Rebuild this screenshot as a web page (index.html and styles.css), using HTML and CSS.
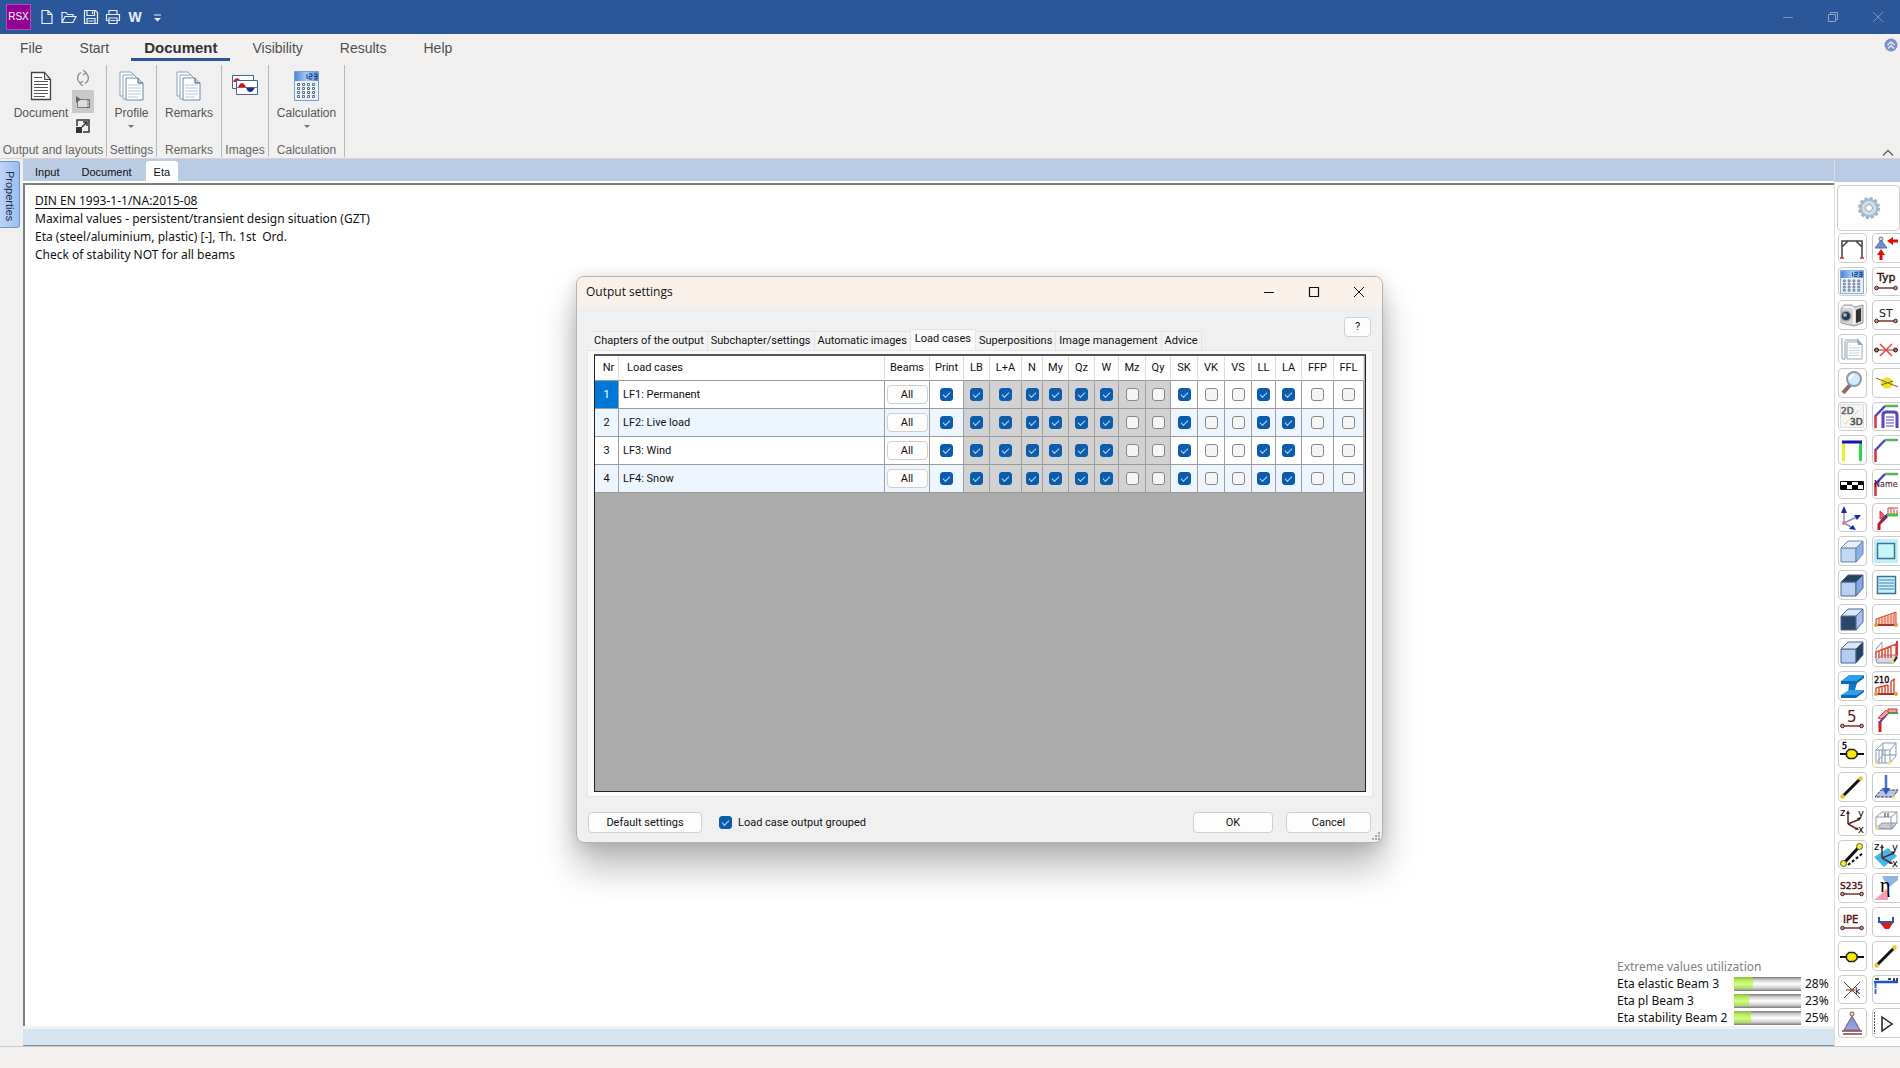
FILE: index.html
```html
<!DOCTYPE html>
<html lang="en">
<head>
<meta charset="utf-8">
<title>RSX - Output settings</title>
<link rel="stylesheet" href="styles.css">
</head>
<body>
<svg class="defs" aria-hidden="true">
  <defs>
    <linearGradient id="gHead" x1="0" y1="0" x2="1" y2="0"><stop offset="0" stop-color="#4f87dc"/><stop offset=".5" stop-color="#a9c9f5"/><stop offset="1" stop-color="#5b90df"/></linearGradient>
    <linearGradient id="gCone" x1="0" y1="0" x2="0" y2="1"><stop offset="0" stop-color="#6f8fd0"/><stop offset="1" stop-color="#a9a4d8"/></linearGradient>
    <g id="pages">
      <path d="M1 1h11l4 4v20H1z" fill="#fff" stroke="#8aa3c0"/>
      <path d="M4 4h11l4 4v20H4z" fill="#fff" stroke="#8aa3c0"/>
      <path d="M7 7h12l5 5v17H7z" fill="#fff" stroke="#6d89a8"/>
      <path d="M19 7v5h5" fill="#c9d8ea" stroke="#41566e"/>
      <path d="M9 14h13M9 17h13M9 20h13M9 23h13M9 26h10" stroke="#b5c9e0"/>
    </g>
    <g id="calc">
      <path d="M.5.5h24v29H.5z" fill="#eaf2fc" stroke="#7c9cc8"/>
      <path d="M1 1h23v9H1z" fill="url(#gHead)"/>
      <path d="M13 3v5M15 3h3v2.500h-3V8h3M20 3h3v5h-3M20 5.500h3" fill="none" stroke="#143a7c"/>
      <g fill="#fff" stroke="#5f6f88"><path d="M3.500 12.500h2v2h-2zM8.500 12.500h2v2h-2zM13.500 12.500h2v2h-2zM18.500 12.500h2v2h-2zM3.500 16.500h2v2h-2zM8.500 16.500h2v2h-2zM13.500 16.500h2v2h-2zM18.500 16.500h2v2h-2zM3.500 20.500h2v2h-2zM8.500 20.500h2v2h-2zM13.500 20.500h2v2h-2zM18.500 20.500h2v2h-2zM3.500 24.500h2v2h-2zM8.500 24.500h2v2h-2zM13.500 24.500h2v2h-2zM18.500 24.500h2v2h-2z"/></g>
    </g>
    <g id="beam"><path d="M3 18h18" stroke="#7b3030" stroke-width="1.500"/><circle cx="2.500" cy="18" r="1.800" fill="#c98" stroke="#401818"/><circle cx="21.500" cy="18" r="1.800" fill="#c98" stroke="#401818"/></g>
    <g id="poly" fill="none" stroke-width="2.500"><path d="M1.500 24V11" stroke="#d8343c"/><path d="M1.500 12L11 2" stroke="#4a45c8"/><path d="M11 2h13" stroke="#5fae5f"/></g>
    <g id="node"><path d="M0 13h24" stroke="#111" stroke-width="2"/><path d="M9 8.500h5l3 2.500v4l-3 2.500H9L6.500 15v-4z" fill="#ffe800" stroke="#222" stroke-width="1.500"/></g>
    <g id="rod"><path d="M2 22L21 3" stroke="#111" stroke-width="3"/><circle cx="2.500" cy="21.500" r="2.300" fill="#f2c51e"/><circle cx="20.500" cy="3.500" r="2.300" fill="#f2c51e"/></g>
    <g id="zyx"><path d="M8 3v12M8 15l12-5M8 15l9 5" stroke="#5a2a2a" stroke-width="1.500"/><path d="M8 1l2 4H6zM17 9l4-1-2 4zM15 21l4 0-2-3z" fill="#5a2a2a"/><text x="0" y="7" font-size="10">z</text><text x="18" y="8" font-size="10">y</text><text x="18" y="24" font-size="10">x</text></g>
  </defs>
</svg>

<header class="titlebar">
  <span class="logo">RSX</span>
  <button class="quick" aria-label="New"><svg width="16" height="16" fill="none" stroke="#e8eefa" stroke-width="1.200"><path d="M3 1.500h6l4 4v9H3zM9 1.500v4h4"/></svg></button>
  <button class="quick" aria-label="Open"><svg width="16" height="16" fill="none" stroke="#e8eefa" stroke-width="1.200"><path d="M1 13.500v-10h4l1.500 2H12v2M1 13.500L4 7.500h11l-3 6z"/></svg></button>
  <button class="quick" aria-label="Save"><svg width="16" height="16" fill="none" stroke="#e8eefa" stroke-width="1.200"><path d="M1.500 1.500h11l2 2v11h-13zM4 1.500v5h7.500v-5M4 14.500V9.500h8v5M9.500 2.500v2.500M5.500 12h5"/></svg></button>
  <button class="quick" aria-label="Print"><svg width="16" height="16" fill="none" stroke="#e8eefa" stroke-width="1.200"><path d="M4 5V1.500h8V5M4 11.500H1.500V5.500h13v6H12M4 9h8v5.500H4zM5.500 11.500h5"/></svg></button>
  <button class="quick word" aria-label="Export to Word">W</button>
  <button class="quick" aria-label="Customize"><svg width="16" height="16"><path d="M5 6h7" stroke="#e8eefa"/><path d="M5 9h7l-3.500 3.500z" fill="#e8eefa"/></svg></button>
  <div class="winctl">
    <button aria-label="Minimize"><svg width="12" height="12" fill="none" stroke="#7893c0"><path d="M1 6.500h10"/></svg></button>
    <button aria-label="Restore"><svg width="12" height="12" fill="none" stroke="#8ba3cb"><path d="M1.500 3.500h7v7h-7zM3.500 3.500v-2h7v7h-2"/></svg></button>
    <button aria-label="Close"><svg width="12" height="12" fill="none" stroke="#7893c0"><path d="M1 1l10 10M11 1L1 11"/></svg></button>
  </div>
</header>

<nav class="menu">
  <a href="#">File</a><a href="#">Start</a><a href="#" class="active">Document</a><a href="#">Visibility</a><a href="#">Results</a><a href="#">Help</a>
  <button class="up" aria-label="Info"><svg width="14" height="14"><circle cx="7" cy="7" r="6.500" fill="#7f8fc8"/><path d="M3.500 7L7 4l3.500 3M4 10.500L7 7.500l3 3" fill="none" stroke="#dfe8ff" stroke-width="1.500"/></svg></button>
</nav>

<section class="ribbon">
  <div class="group g1">
    <div class="tools">
      <button class="big"><svg width="24" height="30"><path d="M2.500 1.500h13l6 7v20h-19z" fill="#fff" stroke="#444" stroke-width="1.300"/><path d="M15.500 1.500v7h6z" fill="#ddd" stroke="#444"/><path d="M5 6.500h8M5 10.500h14M5 13.500h14M5 16.500h14M5 19.500h14M5 22.500h14M5 25.500h11" stroke="#555"/></svg>Document</button>
      <div class="stack">
        <button aria-label="Refresh"><svg width="16" height="16" fill="none" stroke="#8c8c8c" stroke-width="1.200"><path d="M6 2.500A6 6 0 0 0 5.500 13M10 13.500A6 6 0 0 0 10.500 3M8 0l3 2.500-3 2.500M8 16l-3-2.500L8 11"/></svg></button>
        <button class="on" aria-label="Preview"><svg width="16" height="16"><path d="M2.500 5.500h12v8h-12z" fill="#ddd" stroke="#777"/><path d="M1 2l5 3.500L1 9z" fill="#666"/><path d="M13 6v8" stroke="#555" stroke-dasharray="2 1"/></svg></button>
        <button aria-label="Expand"><svg width="16" height="16" fill="none" stroke="#333" stroke-width="1.500"><path d="M2 8V2h12v12H8M7 9l5-5M8 4h4v4"/><path d="M1 9h6v6H1z" fill="#333" stroke="none"/></svg></button>
      </div>
    </div>
    <span class="caption">Output and layouts</span>
  </div>
  <div class="group g2"><div class="tools"><button class="big"><svg width="25" height="30"><use href="#pages"/></svg>Profile<i class="caret"></i></button></div><span class="caption">Settings</span></div>
  <div class="group g3"><div class="tools"><button class="big"><svg width="25" height="30"><use href="#pages"/></svg>Remarks</button></div><span class="caption">Remarks</span></div>
  <div class="group g4"><div class="tools"><button class="big" aria-label="Images"><svg width="28" height="30"><path d="M1.500 4.500h21v13h-21z" fill="#fff" stroke="#49648c"/><path d="M2 11c2-5 6-5 8 0z" fill="#d01818"/><path d="M5.500 9.500h21v14h-21z" fill="#fff" stroke="#49648c"/><path d="M6 16.500h20" stroke="#888"/><path d="M7 16.500c2-6 6-6 8 0z" fill="#d01818"/><path d="M15 16.500c2 6 6 6 9 0z" fill="#1c2f8c"/></svg></button></div><span class="caption">Images</span></div>
  <div class="group g5"><div class="tools"><button class="big"><svg width="25" height="30"><use href="#calc"/></svg>Calculation<i class="caret"></i></button></div><span class="caption">Calculation</span></div>
  <button class="collapse" aria-label="Collapse ribbon"><svg width="12" height="8" fill="none" stroke="#666" stroke-width="1.500"><path d="M1 6.500l5-5 5 5"/></svg></button>
</section>

<main class="work">
  <aside class="side"><button class="properties">Properties</button></aside>
  <div class="center">
    <nav class="viewtabs"><a href="#">Input</a><a href="#">Document</a><a href="#" class="active">Eta</a></nav>
    <div class="canvas">
      <div class="notes">
        <p><u>DIN EN 1993-1-1/NA:2015-08</u></p>
        <p>Maximal values - persistent/transient design situation (GZT)</p>
        <p>Eta (steel/aluminium, plastic) [-], Th. 1st&nbsp; Ord.</p>
        <p>Check of stability NOT for all beams</p>
      </div>
      <div class="extreme">
        <p class="head">Extreme values utilization</p>
        <span>Eta elastic Beam 3</span><div class="bar"><div style="width:28%"></div></div><span>28%</span>
        <span>Eta pl Beam 3</span><div class="bar"><div style="width:23%"></div></div><span>23%</span>
        <span>Eta stability Beam 2</span><div class="bar"><div style="width:25%"></div></div><span>25%</span>
      </div>
    </div>
    <div class="hscroll"></div>
  </div>
  <aside class="palette">
    <div class="strip"></div>
    <button class="gear" aria-label="Settings"><svg width="24" height="24" viewBox="0 0 24 24"><circle cx="12" cy="12" r="7" fill="none" stroke="#a9bfd0" stroke-width="5"/><circle cx="12" cy="12" r="9.500" fill="none" stroke="#9db4c8" stroke-width="3" stroke-dasharray="3 2"/><circle cx="12" cy="12" r="6" fill="none" stroke="#d3e0ea" stroke-width="2"/><circle cx="12" cy="12" r="3.500" fill="#fff" stroke="#7f9bb4"/></svg></button>
    <div class="icons">
      <button aria-label="Frame"><svg viewBox="0 0 24 24"><path d="M2 22V5h20v17M2 11l6-6M22 11l-6-6" fill="none" stroke="#444" stroke-width="1.500"/><path d="M0 22h4M20 22h4" stroke="#c33" stroke-width="1.500"/></svg></button>
      <button aria-label="Support loads"><svg viewBox="0 0 24 24"><circle cx="7" cy="3" r="2" fill="#ddd" stroke="#777"/><path d="M7 4l6 8H1z" fill="#6f8fd0" stroke="#5570a8"/><path d="M24 5h-6M7 24v-6" stroke="#e00b0b" stroke-width="3"/><path d="M13 5l6-4v8zM7 13l-4 6h8z" fill="#e00b0b"/></svg></button>
      <button aria-label="Calculate"><svg viewBox="0 0 25 30" preserveAspectRatio="none"><use href="#calc"/></svg></button>
      <button aria-label="Type"><svg viewBox="0 0 24 24"><use href="#beam"/><text x="3" y="11" font-size="11" fill="#311" stroke="#311" stroke-width=".4">Typ</text></svg></button>
      <button aria-label="Camera"><svg viewBox="0 0 24 24"><path d="M1 6l3-4h8l2 2 9-2v18l-9 3-13-3z" fill="#d6d6d6" stroke="#9a9a9a"/><path d="M3 4h9l2 3v14" fill="none" stroke="#f4f4f4" stroke-width="2"/><path d="M16 7l5-2v13l-5 2z" fill="#333"/><circle cx="6" cy="13" r="5.500" fill="#999"/><circle cx="6" cy="13" r="4" fill="#26384c"/><circle cx="5" cy="12" r="2" fill="#8ab4d4"/></svg></button>
      <button aria-label="ST"><svg viewBox="0 0 24 24"><use href="#beam"/><text x="5" y="14" font-size="11" fill="#222">ST</text></svg></button>
      <button aria-label="Documents"><svg viewBox="0 0 24 24"><path d="M2 1v20q0 2 3 1V4M5 3h13v15" fill="#fff" stroke="#8d9cac"/><path d="M7 5h11l4 3v14H7z" fill="#fff" stroke="#9aaabc"/><path d="M17 1l6 7h-5z" fill="#8fa4ba"/><path d="M9 11h11M9 13.500h11M9 16h11M9 18.500h11" stroke="#c6d4e4"/></svg></button>
      <button aria-label="Remove"><svg viewBox="0 0 24 24"><path d="M2 13h20" stroke="#733"/><circle cx="2.500" cy="13" r="2" fill="#a66" stroke="#411"/><circle cx="21.500" cy="13" r="2" fill="#a66" stroke="#411"/><path d="M6 7l12 12M18 7L6 19" stroke="#e44" stroke-width="1.500"/></svg></button>
      <button aria-label="Zoom"><svg viewBox="0 0 24 24"><path d="M10 14l-7 8" stroke="#8a6c66" stroke-width="4"/><circle cx="14" cy="8" r="7" fill="#d5eafa" stroke="#8b9cae" stroke-width="2"/><path d="M10 8a4 4 0 0 1 4-4" stroke="#fff" stroke-width="2" fill="none"/></svg></button>
      <button aria-label="Section"><svg viewBox="0 0 24 24"><ellipse cx="13" cy="12" rx="6" ry="5.500" fill="#f0e020"/><path d="M2 7l22 9M7 14l12-4" stroke="#786c20"/></svg></button>
      <button aria-label="2D/3D"><svg viewBox="0 0 24 24"><path d="M.5.5h23v23H.500z" fill="#f6f6f6" stroke="#ddd"/><path d="M5 20L19 6" stroke="#e6d27a"/><text x="1" y="10" font-size="9" fill="#666" stroke="#666" stroke-width=".6">2D</text><text x="10" y="21" font-size="9" fill="#555" stroke="#555" stroke-width=".6">3D</text></svg></button>
      <button aria-label="Profile view"><svg viewBox="0 0 24 24"><use href="#poly"/><path d="M9 24V11q0-3 3-3h8q3 0 3 3v13" fill="none" stroke="#5a45c0" stroke-width="3"/><path d="M12 13h8M12 16h8M12 19h8M12 22h8" stroke="#5a45c0"/></svg></button>
      <button aria-label="Portal"><svg viewBox="0 0 24 24"><path d="M3.500 5v18" stroke="#e8f020" stroke-width="3"/><path d="M20.500 5v18" stroke="#28d848" stroke-width="3"/><path d="M2 4h20" stroke="#1414b0" stroke-width="3"/></svg></button>
      <button aria-label="Polyline"><svg viewBox="0 0 24 24"><use href="#poly"/></svg></button>
      <button aria-label="Scale"><svg viewBox="0 0 24 24"><path d="M.5 9.500h23v8H.500z" fill="#fff" stroke="#111"/><path d="M7 9h5v4H7zM18 9h5v4h-5zM1 13h6v4H1zM12 13h6v4h-6z"/></svg></button>
      <button aria-label="Name"><svg viewBox="0 0 24 24"><use href="#poly"/><text x="0" y="15" font-size="8" fill="#402">Name</text></svg></button>
      <button aria-label="Axes"><svg viewBox="0 0 24 24"><path d="M4 17V4M4 17l13-6M4 17l9 5" stroke="#8592d8" stroke-width="1.500"/><path d="M4 0l3 7H1zM21 9l-7 0 3 5zM16 24l-7-1 4-4z" fill="#1c2a9c"/><circle cx="4" cy="17" r="2" fill="#e77"/></svg></button>
      <button aria-label="Loads"><svg viewBox="0 0 24 24"><path d="M5 24v-6l8-8" fill="none" stroke="#c01818" stroke-width="3"/><path d="M7 15L14 8" stroke="#3535c0" stroke-width="2"/><path d="M13 9h11" stroke="#3c4" stroke-width="3"/><path d="M6 13V5l5 5zM14 8V2M17 8V2M20 8V3M23 8V4M14 2h10" stroke="#d33" fill="#e66"/></svg></button>
      <button aria-label="Cube"><svg viewBox="0 0 24 24" stroke="#6684b4"><path d="M1 9h15v14H1z" fill="#c5d8f2"/><path d="M1 9l7-7h15l-7 7z" fill="#e6eefb"/><path d="M16 9l7-7v13l-7 8z" fill="#8fb0e0"/></svg></button>
      <button aria-label="Area"><svg viewBox="0 0 24 24"><path d="M0 0h24v24H0z" fill="#bff0f4"/><path d="M3.500 4.500h17v15h-17z" fill="#c8f6f8" stroke="#417098" stroke-width="1.500"/></svg></button>
      <button aria-label="Cube top"><svg viewBox="0 0 24 24" stroke="#4a668f"><path d="M1 9h15v14H1z" fill="#b9d0f0"/><path d="M1 9l7-7h15l-7 7z" fill="#26425f"/><path d="M16 9l7-7v13l-7 8z" fill="#83a8e0"/></svg></button>
      <button aria-label="Area text"><svg viewBox="0 0 24 24"><path d="M3.500 3.500h18v17h-18z" fill="#c8f2fa" stroke="#417098" stroke-width="1.500"/><path d="M5 7h15M5 10h15M5 13h15M5 16h15" stroke="#487cc0"/></svg></button>
      <button aria-label="Cube front"><svg viewBox="0 0 24 24" stroke="#4a668f"><path d="M1 9h15v14H1z" fill="#2a4868"/><path d="M1 9l7-7h15l-7 7z" fill="#dce8f8"/><path d="M16 9l7-7v13l-7 8z" fill="#a5c0ea"/></svg></button>
      <button aria-label="Line load"><svg viewBox="0 0 24 24"><path d="M2 18v-6L22 5v13z" fill="#fbd0c0" stroke="#d84830"/><path d="M5 18v-7M8 18v-8M11 18V9M14 18V8M17 18V7M20 18V6" stroke="#e05038"/><path d="M2 18h20" stroke="#a33" stroke-width="2"/><circle cx="2" cy="18" r="2" fill="#dba030"/><circle cx="22" cy="18" r="2" fill="#dba030"/></svg></button>
      <button aria-label="Cube side"><svg viewBox="0 0 24 24" stroke="#4a668f"><path d="M1 9h15v14H1z" fill="#b4cdf0"/><path d="M1 9l7-7h15l-7 7z" fill="#dce8f8"/><path d="M16 9l7-7v13l-7 8z" fill="#26425f"/></svg></button>
      <button aria-label="Area load"><svg viewBox="0 0 24 24"><path d="M2 20l6-5h16l-5 8H3z" fill="#d8d8e4" stroke="#889"/><path d="M2 20V9l6-7v16M8 2L2 9" fill="none" stroke="#9ab"/><path d="M2 18v-6l20-8v14M5 18v-7M8 18v-8M11 18V9M14 18V7M17 18V6" fill="none" stroke="#e05038" stroke-width="1.500"/><path d="M23 1v14" stroke="#d33" stroke-width="2"/><path d="M19 23l4-6" stroke="#222" stroke-width="2"/><circle cx="19" cy="22" r="1.500" fill="#ee2"/></svg></button>
      <button aria-label="Steel profile"><svg viewBox="0 0 24 24"><path d="M9 9h8l-2 7-7 5z" fill="#0f78c4"/><path d="M1 7l8-6h15l-8 6zM1 21l8-5h15l-8 5z" fill="#2ba0ee"/><path d="M1 7h15l8-6v3l-8 6H1zM1 21h15l8-5v2l-8 6H1z" fill="#0c6cb4"/></svg></button>
      <button aria-label="Load values"><svg viewBox="0 0 24 24"><path d="M2 19v-5M5 19v-6M8 19v-6M11 19v-7M14 19v-8M17 19V7M20 19V5M2 14l12-3M17 7l4-2" stroke="#e05038" stroke-width="1.500"/><path d="M2 20h20" stroke="#a33" stroke-width="2"/><circle cx="2" cy="20" r="2" fill="#dba030"/><circle cx="22" cy="20" r="2" fill="#dba030"/><text x="0" y="9" font-size="8" stroke="#111" stroke-width=".4">210</text></svg></button>
      <button aria-label="Beam number"><svg viewBox="0 0 24 24"><use href="#beam"/><text x="7" y="14" font-size="15" fill="#601818">5</text></svg></button>
      <button aria-label="Imposed load"><svg viewBox="0 0 24 24"><path d="M6 24V13" stroke="#c22" stroke-width="3"/><path d="M6 14L14 5" stroke="#4a45c8" stroke-width="2"/><path d="M14 5h10" stroke="#3a4" stroke-width="2"/><path d="M4 10l8-8 3 3-8 6zM14 4V1h9v3" fill="#f0a0a0" stroke="#d33"/></svg></button>
      <button aria-label="Node number"><svg viewBox="0 0 24 24"><use href="#node"/><text x="2" y="8" font-size="8" stroke="#111" stroke-width=".5">5</text></svg></button>
      <button aria-label="Wire box"><svg viewBox="0 0 24 24" fill="none" stroke="#8898b8"><path d="M2 9h14v13H2zM2 9l7-7h13v13l-6 7M16 9l6-7M5 9v13M8 9v13M11 9v13M9 2v12h13M2 22l7-8"/><circle cx="2" cy="22" r="1.500" fill="#fe4" stroke="none"/><circle cx="16" cy="22" r="1.500" fill="#fe4" stroke="none"/></svg></button>
      <button aria-label="Rod"><svg viewBox="0 0 24 24"><use href="#rod"/></svg></button>
      <button aria-label="Point load"><svg viewBox="0 0 24 24"><path d="M1 22l6-7h17l-5 7z" fill="#b8c4e8" stroke="#334" stroke-dasharray="3 1"/><path d="M12 0v15" stroke="#4a70c8" stroke-width="2.500"/><path d="M12 20l-4-7h8z" fill="#3458b8"/><circle cx="20" cy="22" r="1.500" fill="#fe4"/></svg></button>
      <button aria-label="Coordinate system"><svg viewBox="0 0 24 24"><use href="#zyx"/></svg></button>
      <button aria-label="Box"><svg viewBox="0 0 24 24" stroke="#9098a8"><path d="M2 19l6-5h15l-5 6z" fill="#c8c8d8"/><path d="M2 8h15v12H2zM2 8l6-5h15v11l-6 6M17 8l6-5" fill="none"/><path d="M11 4v4M14 4v4" stroke="#333"/><circle cx="3" cy="19" r="1.500" fill="#fe4" stroke="none"/></svg></button>
      <button aria-label="Releases"><svg viewBox="0 0 24 24"><path d="M4 20L19 4" stroke="#111" stroke-width="3"/><path d="M8 22l15-12" stroke="#111" stroke-width="2" stroke-dasharray="3 2"/><circle cx="3.500" cy="20.500" r="3" fill="#f4ee30" stroke="#553"/><circle cx="19.500" cy="3.500" r="3" fill="#f4ee30" stroke="#553"/></svg></button>
      <button aria-label="Local system"><svg viewBox="0 0 24 24"><path d="M0 14l14-9 9 8-13 11z" fill="#40b8ee"/><use href="#zyx"/></svg></button>
      <button aria-label="Material"><svg viewBox="0 0 24 24"><use href="#beam"/><text x="0" y="13" font-size="9" fill="#511" stroke="#511" stroke-width=".4">S235</text></svg></button>
      <button aria-label="Utilization"><svg viewBox="0 0 24 24"><path d="M8 0h16v4L14 12z" fill="#8fb4e0"/><path d="M0 24h14V12z" fill="#f0a0b4"/><text class="eta" x="6" y="16" font-size="20">η</text></svg></button>
      <button aria-label="Cross section"><svg viewBox="0 0 24 24"><use href="#beam"/><text x="3" y="13" font-size="10" fill="#511" stroke="#511" stroke-width=".4">IPE</text></svg></button>
      <button aria-label="Diagram"><svg viewBox="0 0 24 24"><path d="M5 7v5h14V7" fill="none" stroke="#2060a8" stroke-width="2"/><path d="M6 13h13l-4 6h-4z" fill="#e01818"/></svg></button>
      <button aria-label="Node"><svg viewBox="0 0 24 24"><use href="#node"/></svg></button>
      <button aria-label="Member"><svg viewBox="0 0 24 24"><use href="#rod"/></svg></button>
      <button aria-label="Intersection"><svg viewBox="0 0 24 24"><path d="M4 5l16 16M20 5L4 21M6 13h9" stroke="#444"/><circle cx="12" cy="13" r="1.500" fill="#a33"/><text x="15" y="17" font-size="9">k</text></svg></button>
      <button aria-label="Dimension"><svg viewBox="0 0 24 24"><path d="M0 5h24" stroke="#1c50d8" stroke-width="2.500"/><path d="M1.500 6v11" stroke="#4070e0" stroke-width="2" stroke-dasharray="5 1"/><path d="M1 2h4M14 2h3M20 1v3M23 1v3" stroke="#111" stroke-width="1.500"/></svg></button>
      <button aria-label="Support"><svg viewBox="0 0 24 24"><circle cx="12" cy="3" r="2" fill="#eda" stroke="#853"/><path d="M12 5l8 14H4z" fill="url(#gCone)" stroke="#5a6890"/><path d="M2 20h20M3 23h19" stroke="#844" stroke-width="1.500"/></svg></button>
      <button aria-label="Run"><svg viewBox="0 0 24 24"><path d="M.5 1v22" stroke="#555" stroke-dasharray="2 1"/><path d="M8 6l10 7-10 7z" fill="#fff" stroke="#222" stroke-width="1.500"/></svg></button>
    </div>
  </aside>
</main>
<footer class="status"></footer>

<section class="dialog" role="dialog" aria-label="Output settings">
  <header class="dlgtitle">
    <h1>Output settings</h1>
    <button aria-label="Minimize"><svg width="12" height="12" stroke="#111"><path d="M1 6.500h10"/></svg></button>
    <button aria-label="Maximize"><svg width="12" height="12" fill="none" stroke="#111" stroke-width="1.200"><path d="M1.500 1.500h9v9h-9z"/></svg></button>
    <button aria-label="Close"><svg width="12" height="12" stroke="#111"><path d="M1 1l10 10M11 1L1 11"/></svg></button>
  </header>
  <div class="dlgtop"><button class="btn help">?</button></div>
  <nav class="dlgtabs"><a href="#">Chapters of the output</a><a href="#">Subchapter/settings</a><a href="#">Automatic images</a><a href="#" class="active">Load cases</a><a href="#">Superpositions</a><a href="#">Image management</a><a href="#">Advice</a></nav>
  <div class="pane">
    <div class="grid">
      <table>
        <colgroup><col class="w24"><col class="w266"><col class="w45"><col class="w34"><col class="w26"><col class="w32"><col class="w21"><col class="w26"><col class="w26"><col class="w24"><col class="w27"><col class="w25"><col class="w27"><col class="w27"><col class="w27"><col class="w24"><col class="w26"><col class="w32"><col class="w30"></colgroup>
        <thead><tr><th class="nr">Nr</th><th class="name">Load cases</th><th>Beams</th><th>Print</th><th>LB</th><th>L+A</th><th>N</th><th>My</th><th>Qz</th><th>W</th><th>Mz</th><th>Qy</th><th>SK</th><th>VK</th><th>VS</th><th>LL</th><th>LA</th><th>FFP</th><th>FFL</th></tr></thead>
        <tbody>
          <tr><td class="sel">1</td><td class="name">LF1: Permanent</td><td><button class="btn all">All</button></td><td><input type="checkbox" aria-label="Print 1" checked></td><td class="g"><input type="checkbox" aria-label="LB 1" checked></td><td class="g"><input type="checkbox" aria-label="L+A 1" checked></td><td class="g"><input type="checkbox" aria-label="N 1" checked></td><td class="g"><input type="checkbox" aria-label="My 1" checked></td><td class="g"><input type="checkbox" aria-label="Qz 1" checked></td><td class="g"><input type="checkbox" aria-label="W 1" checked></td><td class="g"><input type="checkbox" aria-label="Mz 1"></td><td class="g"><input type="checkbox" aria-label="Qy 1"></td><td><input type="checkbox" aria-label="SK 1" checked></td><td><input type="checkbox" aria-label="VK 1"></td><td><input type="checkbox" aria-label="VS 1"></td><td><input type="checkbox" aria-label="LL 1" checked></td><td><input type="checkbox" aria-label="LA 1" checked></td><td><input type="checkbox" aria-label="FFP 1"></td><td><input type="checkbox" aria-label="FFL 1"></td></tr>
          <tr><td>2</td><td class="name">LF2: Live load</td><td><button class="btn all">All</button></td><td><input type="checkbox" aria-label="Print 2" checked></td><td class="g"><input type="checkbox" aria-label="LB 2" checked></td><td class="g"><input type="checkbox" aria-label="L+A 2" checked></td><td class="g"><input type="checkbox" aria-label="N 2" checked></td><td class="g"><input type="checkbox" aria-label="My 2" checked></td><td class="g"><input type="checkbox" aria-label="Qz 2" checked></td><td class="g"><input type="checkbox" aria-label="W 2" checked></td><td class="g"><input type="checkbox" aria-label="Mz 2"></td><td class="g"><input type="checkbox" aria-label="Qy 2"></td><td><input type="checkbox" aria-label="SK 2" checked></td><td><input type="checkbox" aria-label="VK 2"></td><td><input type="checkbox" aria-label="VS 2"></td><td><input type="checkbox" aria-label="LL 2" checked></td><td><input type="checkbox" aria-label="LA 2" checked></td><td><input type="checkbox" aria-label="FFP 2"></td><td><input type="checkbox" aria-label="FFL 2"></td></tr>
          <tr><td>3</td><td class="name">LF3: Wind</td><td><button class="btn all">All</button></td><td><input type="checkbox" aria-label="Print 3" checked></td><td class="g"><input type="checkbox" aria-label="LB 3" checked></td><td class="g"><input type="checkbox" aria-label="L+A 3" checked></td><td class="g"><input type="checkbox" aria-label="N 3" checked></td><td class="g"><input type="checkbox" aria-label="My 3" checked></td><td class="g"><input type="checkbox" aria-label="Qz 3" checked></td><td class="g"><input type="checkbox" aria-label="W 3" checked></td><td class="g"><input type="checkbox" aria-label="Mz 3"></td><td class="g"><input type="checkbox" aria-label="Qy 3"></td><td><input type="checkbox" aria-label="SK 3" checked></td><td><input type="checkbox" aria-label="VK 3"></td><td><input type="checkbox" aria-label="VS 3"></td><td><input type="checkbox" aria-label="LL 3" checked></td><td><input type="checkbox" aria-label="LA 3" checked></td><td><input type="checkbox" aria-label="FFP 3"></td><td><input type="checkbox" aria-label="FFL 3"></td></tr>
          <tr><td>4</td><td class="name">LF4: Snow</td><td><button class="btn all">All</button></td><td><input type="checkbox" aria-label="Print 4" checked></td><td class="g"><input type="checkbox" aria-label="LB 4" checked></td><td class="g"><input type="checkbox" aria-label="L+A 4" checked></td><td class="g"><input type="checkbox" aria-label="N 4" checked></td><td class="g"><input type="checkbox" aria-label="My 4" checked></td><td class="g"><input type="checkbox" aria-label="Qz 4" checked></td><td class="g"><input type="checkbox" aria-label="W 4" checked></td><td class="g"><input type="checkbox" aria-label="Mz 4"></td><td class="g"><input type="checkbox" aria-label="Qy 4"></td><td><input type="checkbox" aria-label="SK 4" checked></td><td><input type="checkbox" aria-label="VK 4"></td><td><input type="checkbox" aria-label="VS 4"></td><td><input type="checkbox" aria-label="LL 4" checked></td><td><input type="checkbox" aria-label="LA 4" checked></td><td><input type="checkbox" aria-label="FFP 4"></td><td><input type="checkbox" aria-label="FFL 4"></td></tr>
        </tbody>
      </table>
    </div>
  </div>
  <footer class="dlgfoot">
    <button class="btn default">Default settings</button>
    <label><input type="checkbox" checked>Load case output grouped</label>
    <button class="btn ok">OK</button>
    <button class="btn cancel">Cancel</button>
  </footer>
  <svg class="grip" width="8" height="8" fill="#aaa"><path d="M6 0h2v2H6zM3 3h2v2H3zM6 3h2v2H6zM0 6h2v2H0zM3 6h2v2H3zM6 6h2v2H6z"/></svg>
</section>
</body>
</html>
```
FILE: styles.css
```css
* { box-sizing: border-box; }
body {
  margin: 0;
  height: 100vh;
  display: flex;
  flex-direction: column;
  overflow: hidden;
  position: relative;
  background: #f0f0f0;
  color: #111;
  font: 11px/14px "Liberation Sans", Arial, sans-serif;
}
button { font: inherit; color: inherit; border: 0; background: none; padding: 0; }
a { color: inherit; text-decoration: none; }
p { margin: 0; }
svg { display: block; flex: none; }
svg text { font-family: "DejaVu Sans", Verdana, sans-serif; }
svg .eta { font-family: "Liberation Serif", serif; }
.defs { position: absolute; width: 0; height: 0; }

.titlebar { height: 34px; flex: none; display: flex; align-items: center; gap: 6px; padding-left: 6px; background: #2b579a; }
.logo { width: 25px; height: 26px; margin-right: 2px; border: 1px solid #b04cb8; background: #930093; color: #fff; font-size: 10px; line-height: 24px; text-align: center; }
.quick { width: 16px; height: 16px; }
.word { color: #e8eefa; font-size: 14px; font-weight: bold; line-height: 16px; }
.winctl { margin-left: auto; display: flex; gap: 33px; padding-right: 16px; }

.menu { height: 27px; flex: none; display: flex; align-items: stretch; gap: 7px; padding: 0 2px 0 5px; background: #f2f1f0; color: #505050; font-size: 14px; line-height: 28px; }
.menu a { padding: 0 15px; }
.menu .active { padding: 0 13px; border-bottom: 3px solid #2b579a; color: #333; font-weight: bold; font-size: 15px; }
.menu .up { margin-left: auto; align-self: flex-start; padding-top: 4px; }

.ribbon { height: 98px; flex: none; display: flex; padding: 4px 6px 1px 0; border-bottom: 1px solid #d4d4d4; color: #555; font-size: 12px; }
.group { display: flex; flex-direction: column; align-items: center; justify-content: space-between; border-right: 1px solid #b8b8b8; }
.g1 { width: 107px; }
.g2 { width: 50px; }
.g3 { width: 65px; }
.g4 { width: 47px; }
.g5 { width: 76px; }
.tools { display: flex; align-items: flex-start; gap: 4px; padding-top: 6px; }
.g1 .tools { padding: 0 0 0 2px; }
.g1 .big { padding-top: 6px; }
.big { display: flex; flex-direction: column; align-items: center; gap: 5px; }
.stack { display: flex; flex-direction: column; gap: 1px; padding-top: 1px; }
.stack button { width: 22px; height: 23px; display: grid; place-items: center; }
.stack .on { background: #c9c9c9; }
.caret { border: 3px solid transparent; border-top-color: #777; border-bottom: 0; }
.caption { color: #666; white-space: nowrap; line-height: 14px; }
.collapse { margin-left: auto; align-self: flex-end; }

.work { flex: 1; min-height: 0; display: flex; border-bottom: 1px solid #c9c9c9; }
.side { width: 23px; padding-top: 2px; }
.properties { width: 20px; height: 67px; padding-top: 3px; writing-mode: vertical-rl; border: 1px solid #6f96cc; border-left: 0; border-radius: 0 3px 3px 0; background: linear-gradient(90deg, #bcd4f6, #9dbfee); color: #1c2c4c; }
.center { flex: 1; min-width: 0; display: flex; flex-direction: column; }
.viewtabs { height: 24px; flex: none; display: flex; align-items: flex-end; border-bottom: 2px solid #fff; background: #b9cce4; line-height: 18px; }
.viewtabs a { padding: 2px 12px 0; }
.viewtabs a:nth-child(2) { padding: 2px 14px 0 10px; }
.viewtabs .active { padding: 2px 8px 0; border-radius: 3px 3px 0 0; background: #fff; }
.canvas { flex: 1; display: flex; flex-direction: column; justify-content: space-between; border: solid #7f7f7f; border-width: 2px 0 0 2px; background: #fff; font: 12px/18px "Noto Sans", "Open Sans", sans-serif; }
.notes { padding: 7px 10px; }
.notes u { text-underline-offset: 3px; }
.extreme { align-self: flex-end; display: grid; grid-template-columns: 113px 67px 26px; column-gap: 4px; align-items: center; padding-right: 3px; line-height: 17px; white-space: nowrap; }
.extreme .head { grid-column: 1 / -1; color: #808080; }
.bar { height: 14px; background: linear-gradient(#777, #ccc 20%, #fff 50%, #ccc 80%, #777); }
.bar div { height: 12px; background: linear-gradient(#93b84a, #b9ee58 30%, #d4fa8a 60%, #a8dc50); }
.hscroll { height: 20px; flex: none; border-top: 3px solid #f0f3f4; border-bottom: 1px solid #8b8f98; background: #d6e3f0; }
.status { height: 21px; flex: none; background: #f2f0ee; }

.palette { width: 66px; flex: none; display: flex; flex-direction: column; background: #fff; border-left: 1px solid #ddd; overflow: hidden; }
.strip { height: 23px; flex: none; background: #b9cce4; }
.palette button { display: grid; place-items: center; border: 1px solid #ccc; border-radius: 4px; background: #fff; }
.palette .gear { width: 63px; height: 46px; flex: none; margin: 3px 0 0 2px; }
.icons { flex: 1; min-height: 0; display: grid; grid-template-columns: 29px 34px; grid-auto-rows: 1fr; gap: 4px 5px; padding: 2px 0 8px 3px; }
.palette .icons button { min-height: 0; place-items: center start; padding-left: 1px; }
.icons svg { width: 24px; height: 24px; overflow: visible; }

.dialog { position: absolute; left: 576px; top: 276px; width: 807px; display: flex; flex-direction: column; border: 1px solid #b4b4b4; border-radius: 8px; background: #f0f0f0; box-shadow: 0 24px 36px rgba(0,0,0,.28), 0 2px 16px rgba(0,0,0,.14); font: 11px/14px Roboto, "Liberation Sans", sans-serif; }
.dlgtitle { height: 30px; display: flex; align-items: center; gap: 33px; padding: 0 17px 0 9px; border-radius: 7px 7px 0 0; background: #f9f1ea; }
.dlgtitle h1 { margin: 0 auto 0 0; font: 12px/16px "Open Sans", "Noto Sans", sans-serif; }
.btn { border: 1px solid #d0d0d0; border-radius: 4px; background: #fdfdfd; }
.dlgtop { height: 24px; display: flex; justify-content: flex-end; padding: 10px 11px 0 0; }
.help { width: 27px; height: 20px; flex: none; }
.dlgtabs { height: 19px; display: flex; align-items: stretch; margin-left: 14px; line-height: 18px; white-space: nowrap; }
.dlgtabs a { padding: 0 3px; border: 1px solid #e4e4e4; border-width: 1px 1px 0 0; background: #f3f3f3; }
.dlgtabs .active { margin-top: -2px; padding: 0 4px; background: #fafafa; }
.pane { margin: 0 9px 0 10px; padding: 3px 6px 4px; background: #fafafa; border: 1px solid #e6e6e6; }
.grid { height: 438px; border: 1px solid #222; border-top: 2px solid #555; background: #ababab; }
table { width: 769px; border-collapse: separate; border-spacing: 0; table-layout: fixed; }
th { height: 25px; padding: 0; font-weight: normal; background: #fff; border-right: 1px solid #ddd; border-bottom: 1px solid #999; }
td { height: 28px; padding: 0; text-align: center; background: #fff; border-right: 1px solid #a0a0a0; border-bottom: 1px solid #999; }
tbody tr:nth-child(even) td { background: #edf6fe; }
tbody td.g, tbody tr:nth-child(even) td.g { background: #d2d2d2; }
tbody td.sel { background: #0078d7; color: #fff; }
.nr { padding-left: 4px; }
.name { text-align: left; padding-left: 4px; }
th.name { padding-left: 8px; }
.all { width: 41px; height: 19px; display: block; margin: 0 auto; }
input { appearance: none; width: 13px; height: 13px; margin: 0 auto; display: grid; place-items: center; border: 1px solid #888; border-radius: 3px; background: #f5f5f5; }
input:checked { border-color: #0b5cad; background: #0b5cad; }
input:checked::after { content: ""; width: 6px; height: 3px; border: solid #b8d8f6; border-width: 0 0 1px 1px; transform: rotate(-45deg); margin-bottom: 2px; }
.w21 { width: 21px; } .w24 { width: 24px; } .w25 { width: 25px; } .w26 { width: 26px; } .w27 { width: 27px; } .w30 { width: 30px; }
.w32 { width: 32px; } .w34 { width: 34px; } .w45 { width: 45px; } .w266 { width: 266px; }
.dlgfoot { display: flex; align-items: center; gap: 13px; padding: 15px 11px 9px; }
.dlgfoot .btn { height: 21px; }
.dlgfoot label { display: flex; align-items: center; gap: 6px; margin: 0 auto 0 4px; }
.default { width: 114px; }
.ok { width: 80px; }
.cancel { width: 85px; }
.grip { position: absolute; right: 2px; bottom: 2px; }
```
